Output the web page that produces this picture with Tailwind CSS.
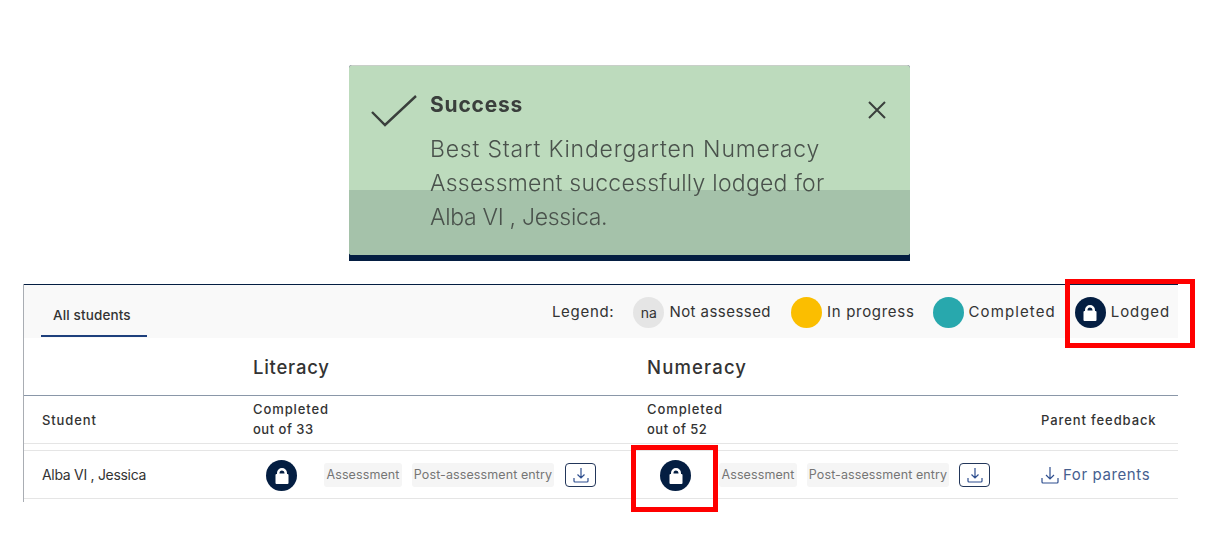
<!DOCTYPE html>
<html lang="en">
<head>
    <meta charset="UTF-8">
    <meta name="viewport" content="width=device-width, initial-scale=1.0">
    <title>Lodged assessment</title>
    <script src="https://cdn.jsdelivr.net/npm/@tailwindcss/browser@4"></script>
</head>
<body class="relative w-[1208px] h-[536px] overflow-hidden bg-white pt-[65px] font-['Inter',sans-serif] text-[#333]">

    <!-- Success toast -->
    <div class="ml-[349px] w-[561px] h-[196px] bg-[#041e42] rounded-t-[3px]">
        <div class="relative h-[190px] bg-[#bddbbd] border-t border-[#c9cfc9] rounded-[3px] overflow-hidden">
            <div class="absolute left-0 right-0 top-[124px] bottom-0 bg-[#a5c2aa]"></div>
            <div class="relative flex pl-[22px] pr-[23px] pt-[24px] blur-[0.3px]">
                <svg class="w-[46px] h-[36px] mt-[4px] shrink-0" viewBox="0 0 46 36" fill="none" stroke="#3a3f3c" stroke-width="2.4">
                    <path d="M1 18 L14 31 L45 2" />
                </svg>
                <div class="ml-[13px] flex-1">
                    <div class="text-[21px] leading-[28px] font-bold text-[#3a3f3c] mt-[1px] tracking-[0.8px]">Success</div>
                    <p class="mt-[13px] text-[23px] leading-[34px] font-light text-[#4a524c] whitespace-nowrap">
                        <span class="block tracking-[0.8px]">Best Start Kindergarten Numeracy</span>
                        <span class="block tracking-[0.25px]">Assessment successfully lodged for</span>
                        <span class="block tracking-[-0.3px]">Alba VI , Jessica.</span>
                    </p>
                </div>
                <svg class="w-[20px] h-[20px] mt-[10px] shrink-0" viewBox="0 0 20 20" fill="none" stroke="#3a3f3c" stroke-width="2">
                    <path d="M2 2 L18 18 M18 2 L2 18" />
                </svg>
            </div>
        </div>
    </div>

    <!-- Students table -->
    <div class="mt-[23px] ml-[23px] w-[1155px] h-[218px] border-l border-[#a9adb3]">
        <div class="border-t border-[#041e42]">
            <div class="h-[53px] bg-[#f9f9f9] flex justify-between">
                <div class="ml-[17px] w-[106px] h-[52px] border-b-2 border-[#1d3f7c] pl-[12px] pt-[21px] text-[13.500px] leading-[18px] font-medium tracking-[0.14px]">All students</div>
                <div class="flex items-center pt-[2px] pr-[8px] text-[15px] text-[#333]">
                    <span class="mr-[19px] tracking-[0.7px]">Legend:</span>
                    <span class="w-[31px] h-[31px] rounded-full bg-[#e5e5e5] flex items-center justify-center text-[14px] mr-[5px]">na</span>
                    <span class="mr-[20px] tracking-[0.45px]">Not assessed</span>
                    <span class="w-[31px] h-[31px] rounded-full bg-[#fbbe00] mr-[5px]"></span>
                    <span class="mr-[18px] tracking-[0.7px]">In progress</span>
                    <span class="w-[31px] h-[31px] rounded-full bg-[#28a8ad] mr-[5px]"></span>
                    <span class="mr-[19px] tracking-[1.1px]">Completed</span>
                    <span class="w-[31px] h-[31px] rounded-full bg-[#041e42] flex items-center justify-center mr-[5px]">
                        <svg class="w-[14px] h-[17px]" viewBox="0 0 14 17"><path fill="#fff" fill-rule="evenodd" d="M2 7V6a5 5 0 0 1 10 0v1h.5a1 1 0 0 1 1 1v8a1 1 0 0 1-1 1h-11a1 1 0 0 1-1-1V8a1 1 0 0 1 1-1zm2.500-.5h5V6a2.500 2.500 0 0 0-5 0z"/></svg>
                    </span>
                    <span class="tracking-[0.9px]">Lodged</span>
                </div>
            </div>
            <div class="h-[58px] grid grid-cols-[229px_394px_394px_138px] border-b border-[#8a97a8]">
                <div></div>
                <div class="pt-[17px] text-[18.500px] leading-[24px] font-medium tracking-[0.75px]">Literacy</div>
                <div class="pt-[17px] text-[18.500px] leading-[24px] font-medium tracking-[1.15px]">Numeracy</div>
                <div></div>
            </div>
            <div class="h-[48px] grid grid-cols-[229px_394px_394px_138px] items-center border-b border-[#e5e5e5] text-[13px] leading-[20px] font-medium tracking-[0.9px]">
                <div class="pl-[18px] pt-[1px]">Student</div>
                <div class="pb-[2px]">Completed<br><span class="tracking-[0.5px]">out of 33</span></div>
                <div class="pb-[2px]">Completed<br><span class="tracking-[0.5px]">out of 52</span></div>
                <div class="whitespace-nowrap pt-[1px]">Parent feedback</div>
            </div>
            <div class="h-[46px] pt-[1px] mt-[6px] border-t border-[#e5e5e5] grid grid-cols-[229px_394px_394px_138px] items-center border-b box-content text-[14px]">
                <div class="pl-[18px] pb-[2px] tracking-[-0.3px]">Alba VI , Jessica</div>
                <div class="flex items-center">
                    <span class="ml-[13px] w-[31px] h-[31px] rounded-full bg-[#041e42] flex items-center justify-center">
                        <svg class="w-[14px] h-[17px]" viewBox="0 0 14 17"><path fill="#fff" fill-rule="evenodd" d="M2 7V6a5 5 0 0 1 10 0v1h.5a1 1 0 0 1 1 1v8a1 1 0 0 1-1 1h-11a1 1 0 0 1-1-1V8a1 1 0 0 1 1-1zm2.500-.5h5V6a2.500 2.500 0 0 0-5 0z"/></svg>
                    </span>
                    <span class="ml-[27px] w-[78px] h-[24px] rounded-[3px] bg-[#f5f5f5] flex items-center justify-center text-[12.500px] text-[#757575] tracking-[0.1px]">Assessment</span>
                    <span class="ml-[10px] w-[142px] h-[24px] rounded-[3px] bg-[#f5f5f5] flex items-center justify-center text-[12.500px] text-[#757575] tracking-[0.1px] whitespace-nowrap">Post-assessment entry</span>
                    <span class="ml-[11px] w-[31px] h-[24px] rounded-[4px] border border-[#22365a] flex items-center justify-center">
                        <svg class="w-[16px] h-[16px]" viewBox="0 0 16 16" fill="none" stroke="#2f4f8f" stroke-width="1.2"><path d="M8 1v10M4.500 7.500 8 11l3.500-3.500M1 11v3a1 1 0 0 0 1 1h12a1 1 0 0 0 1-1v-3" /></svg>
                    </span>
                </div>
                <div class="flex items-center">
                    <span class="ml-[13px] w-[31px] h-[31px] rounded-full bg-[#041e42] flex items-center justify-center">
                        <svg class="w-[14px] h-[17px]" viewBox="0 0 14 17"><path fill="#fff" fill-rule="evenodd" d="M2 7V6a5 5 0 0 1 10 0v1h.5a1 1 0 0 1 1 1v8a1 1 0 0 1-1 1h-11a1 1 0 0 1-1-1V8a1 1 0 0 1 1-1zm2.500-.5h5V6a2.500 2.500 0 0 0-5 0z"/></svg>
                    </span>
                    <span class="ml-[28px] w-[78px] h-[24px] rounded-[3px] bg-[#f5f5f5] flex items-center justify-center text-[12.500px] text-[#757575] tracking-[0.1px]">Assessment</span>
                    <span class="ml-[10px] w-[142px] h-[24px] rounded-[3px] bg-[#f5f5f5] flex items-center justify-center text-[12.500px] text-[#757575] tracking-[0.1px] whitespace-nowrap">Post-assessment entry</span>
                    <span class="ml-[10px] w-[31px] h-[24px] rounded-[4px] border border-[#22365a] flex items-center justify-center">
                        <svg class="w-[16px] h-[16px]" viewBox="0 0 16 16" fill="none" stroke="#2f4f8f" stroke-width="1.2"><path d="M8 1v10M4.500 7.500 8 11l3.500-3.500M1 11v3a1 1 0 0 0 1 1h12a1 1 0 0 0 1-1v-3" /></svg>
                    </span>
                </div>
                <div class="flex items-center text-[#46608f] text-[15px] tracking-[0.6px] whitespace-nowrap">
                    <svg class="w-[18px] h-[18px] mr-[4px] shrink-0" viewBox="0 0 18 18" fill="none" stroke="#2f4f8f" stroke-width="1.2"><path d="M9 1v12M5 9l4 4 4-4M1 12v4a1 1 0 0 0 1 1h14a1 1 0 0 0 1-1v-4" /></svg>
                    For parents
                </div>
            </div>
        </div>
    </div>

    <!-- Red highlight boxes drawn over the screenshot -->
    <div class="absolute left-[1065px] top-[279px] w-[130px] h-[69px] border-[5px] border-[#ff0000]"></div>
    <div class="absolute left-[631px] top-[445px] w-[87px] h-[67px] border-[5px] border-[#ff0000]"></div>
</body>
</html>
